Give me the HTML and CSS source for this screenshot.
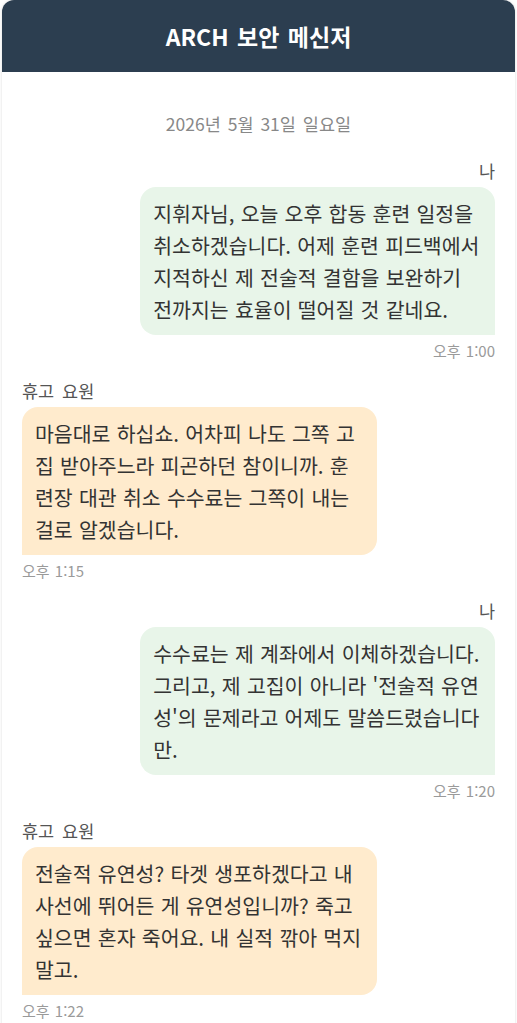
FILE: index.html
```html
<!DOCTYPE html>
<html lang="ko">
<head>
    <meta charset="UTF-8">
    <meta name="viewport" content="width=device-width, initial-scale=1.0">
    <title>ARCH 보안 메신저</title>
    <link rel="stylesheet" href="styles.css">
</head>
<body>
    <div class="messenger">
        <!-- Cabecera -->
        <header class="cabecera">
            <h1>ARCH 보안 메신저</h1>
        </header>

        <div class="chat">
            <div class="fecha">2026년 5월 31일 일요일</div>

            <div class="mensaje enviado">
                <div class="remitente">나</div>
                <div class="burbuja">지휘자님, 오늘 오후 합동 훈련 일정을 취소하겠습니다. 어제 훈련 피드백에서 지적하신 제 전술적 결함을 보완하기 전까지는 효율이 떨어질 것 같네요.</div>
                <div class="hora">오후 1:00</div>
            </div>

            <div class="mensaje recibido">
                <div class="remitente">휴고 요원</div>
                <div class="burbuja">마음대로 하십쇼. 어차피 나도 그쪽 고집 받아주느라 피곤하던 참이니까. 훈련장 대관 취소 수수료는 그쪽이 내는 걸로 알겠습니다.</div>
                <div class="hora">오후 1:15</div>
            </div>

            <div class="mensaje enviado">
                <div class="remitente">나</div>
                <div class="burbuja">수수료는 제 계좌에서 이체하겠습니다. 그리고, 제 고집이 아니라 '전술적 유연성'의 문제라고 어제도 말씀드렸습니다만.</div>
                <div class="hora">오후 1:20</div>
            </div>

            <div class="mensaje recibido">
                <div class="remitente">휴고 요원</div>
                <div class="burbuja">전술적 유연성? 타겟 생포하겠다고 내 사선에 뛰어든 게 유연성입니까? 죽고 싶으면 혼자 죽어요. 내 실적 깎아 먹지 말고.</div>
                <div class="hora">오후 1:22</div>
            </div>
        </div>
    </div>
</body>
</html>
```

FILE: styles.css
```css
body {
    margin: 0;
    padding: 0 2px;
    background-color: #ffffff;
    font-family: "Noto Sans CJK KR", "Noto Sans", sans-serif;
    color: #333;
}

.messenger {
    border-radius: 12px 12px 0 0;
    overflow: hidden;
    box-shadow: 0 0 3px rgba(0, 0, 0, 0.15);
    background-color: #fff;
}

.cabecera {
    background-color: #2c3e50;
    color: white;
    height: 72px;
    display: flex;
    align-items: center;
    justify-content: center;
}

.cabecera h1 {
    margin: 0;
    font-size: 23px;
    font-weight: bold;
    word-spacing: 2px;
    line-height: 30px;
}

.chat {
    padding: 20px;
    display: flex;
    flex-direction: column;
}

.fecha {
    text-align: center;
    color: #888;
    font-size: 17.5px;
    line-height: 24px;
    word-spacing: 2px;
    margin: 20px 0 24px;
}

.mensaje {
    display: flex;
    flex-direction: column;
    margin-bottom: 19px;
}

.enviado {
    align-items: flex-end;
}

.recibido {
    align-items: flex-start;
}

.remitente {
    font-size: 17.5px;
    line-height: 22px;
    word-spacing: 3px;
    color: #555;
    margin-bottom: 5px;
}

.burbuja {
    max-width: 75%;
    box-sizing: border-box;
    padding: 10px 12.5px 10px 13px;
    font-size: 20.5px;
    line-height: 32px;
    word-spacing: 0.5px;
    border-radius: 16px;
    word-break: break-all;
}

.enviado .burbuja {
    background-color: #e8f5e9; /* Verde claro */
    border-bottom-right-radius: 0;
}

.recibido .burbuja {
    background-color: #ffebcd; /* Naranja claro */
    border-bottom-left-radius: 0;
}

.hora {
    font-size: 15px;
    line-height: 20px;
    word-spacing: 1px;
    color: #9a9a9a;
    margin-top: 6px;
}
```
